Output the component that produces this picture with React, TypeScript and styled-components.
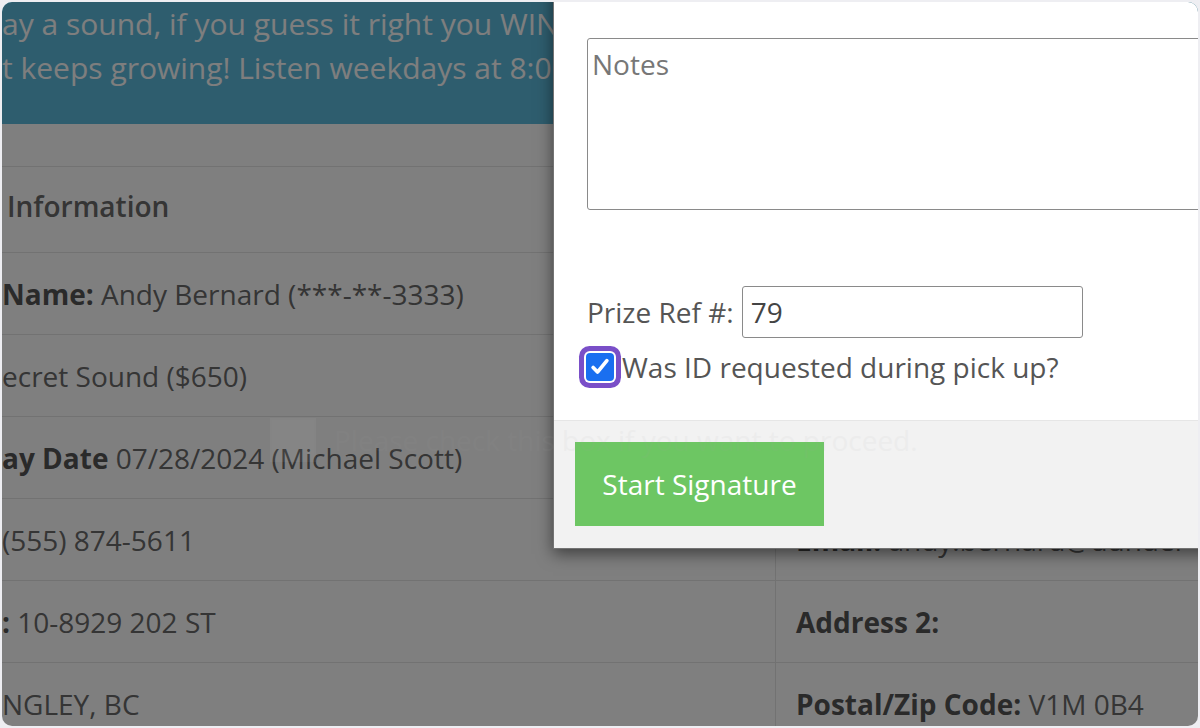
import styled, { createGlobalStyle } from "styled-components";

const GlobalStyle = createGlobalStyle`
  html, body {
    margin: 0;
    padding: 0;
    background: #eeeef2;
  }
  body {
    font-family: "Open Sans", "Noto Sans", sans-serif;
  }
  * {
    box-sizing: border-box;
  }
`;

interface Entry {
  label?: string;
  value?: string;
}

interface Row {
  left: Entry;
  right: Entry;
}

const rows: Row[] = [
  { left: { label: "Name:", value: " Andy Bernard (***-**-3333)" }, right: {} },
  { left: { value: "ecret Sound ($650)" }, right: {} },
  { left: { label: "ay Date", value: " 07/28/2024 (Michael Scott)" }, right: {} },
  {
    left: { value: "(555) 874-5611" },
    right: { label: "Email:", value: " andy.bernard@dunder" },
  },
  { left: { label: ":", value: " 10-8929 202 ST" }, right: { label: "Address 2:" } },
  {
    left: { value: "NGLEY, BC" },
    right: { label: "Postal/Zip Code:", value: " V1M 0B4" },
  },
];

const App = () => {
  return (
    <>
      <GlobalStyle />
      <Frame>
        <Page>
          <Banner>
            <BannerLine>ay a sound, if you guess it right you WIN</BannerLine>
            <BannerLine>t keeps growing! Listen weekdays at 8:00</BannerLine>
          </Banner>
          <Spacer />
          <HeaderRow>
            <HeaderText>Information</HeaderText>
          </HeaderRow>
          {rows.map((row, i) => (
            <TableRow key={i}>
              <Cell>
                {row.left.label && <Label>{row.left.label}</Label>}
                {row.left.value}
              </Cell>
              <Cell divided>
                {row.right.label && <Label>{row.right.label}</Label>}
                {row.right.value}
              </Cell>
            </TableRow>
          ))}
        </Page>
        <Overlay />
        <Ghost>
          <GhostBox />
          Please check this box if you want to proceed.
        </Ghost>
        <Modal>
          <ModalBody>
            <Notes placeholder="Notes" />
            <FieldRow>
              <FieldLabel>Prize Ref #:</FieldLabel>
              <TextInput defaultValue="79" />
            </FieldRow>
            <CheckRow>
              <CheckBox>
                <svg width="22" height="22" viewBox="0 0 24 24" fill="none">
                  <path
                    d="M4.5 12.5l4.8 5L19.5 5"
                    stroke="#fff"
                    strokeWidth="4"
                    strokeLinecap="round"
                    strokeLinejoin="round"
                  />
                </svg>
              </CheckBox>
              <CheckLabel>Was ID requested during pick up?</CheckLabel>
            </CheckRow>
          </ModalBody>
          <ModalFooter>
            <SignButton>Start Signature</SignButton>
          </ModalFooter>
        </Modal>
      </Frame>
    </>
  );
};

export default App;

const Frame = styled.div`
  position: relative;
  margin: 2px;
  height: 724px;
  border-radius: 10px;
  overflow: hidden;
  background: #fff;
`;

const Page = styled.div`
  width: 100%;
`;

const Banner = styled.div`
  height: 122px;
  background: #5cbbdd;
  color: #fdfdfd;
  font-size: 30px;
  line-height: 44px;
  padding-left: 0;
  overflow: hidden;
`;

const BannerLine = styled.div`
  white-space: nowrap;
`;

const Spacer = styled.div`
  height: 42px;
`;

const HeaderRow = styled.div`
  display: flex;
  align-items: center;
  height: 86px;
  border-top: 1px solid #e4e4e4;
  padding: 0 0 8px 5px;
`;

const HeaderText = styled.h3`
  margin: 0;
  font-size: 28px;
  font-weight: 600;
  color: #6a6a6a;
`;

const TableRow = styled.div`
  display: grid;
  grid-template-columns: 773px 1fr;
  height: 82px;
  border-top: 1px solid #e4e4e4;
`;

const Cell = styled.div<{ divided?: boolean }>`
  display: flex;
  align-items: center;
  white-space: pre;
  font-size: 28px;
  color: #6a6a6a;
  padding-left: ${({ divided }) => (divided ? "20px" : "0")};
  border-left: ${({ divided }) => (divided ? "1px solid #e4e4e4" : "none")};
  overflow: hidden;
`;

const Label = styled.b`
  font-weight: 700;
  color: #555;
`;

const Overlay = styled.div`
  position: absolute;
  inset: 0;
  background: rgba(0, 0, 0, 0.5);
`;

const Ghost = styled.div`
  position: absolute;
  left: 268px;
  top: 416px;
  display: flex;
  align-items: center;
  gap: 18px;
  font-size: 28px;
  color: #a4a4a4;
  opacity: 0.07;
  white-space: nowrap;
  z-index: 3;
`;

const GhostBox = styled.span`
  width: 46px;
  height: 44px;
  border: 2px solid #ccc;
  background: #ddd;
`;

const Modal = styled.div`
  position: absolute;
  left: 551px;
  top: -40px;
  width: 720px;
  background: #fff;
  border: 1px solid rgba(0, 0, 0, 0.55);
  box-shadow: 0 5px 15px rgba(0, 0, 0, 0.5);
  z-index: 2;
`;

const ModalBody = styled.div`
  height: 457px;
  padding: 75px 0 0 33px;
  display: flex;
  flex-direction: column;
`;

const Notes = styled.textarea`
  width: 660px;
  height: 172px;
  border: 1px solid #8a8a8a;
  border-radius: 3px;
  padding: 6px 4px;
  font-family: "Open Sans", "Noto Sans", sans-serif;
  font-size: 28px;
  line-height: 38px;
  resize: none;
  &::placeholder {
    color: #777;
  }
`;

const FieldRow = styled.div`
  display: flex;
  align-items: center;
  gap: 8px;
  margin-top: 76px;
`;

const FieldLabel = styled.label`
  font-size: 28px;
  color: #555;
`;

const TextInput = styled.input`
  width: 341px;
  height: 52px;
  border: 1px solid #8a8a8a;
  border-radius: 3px;
  padding: 0 8px;
  font-family: "Open Sans", "Noto Sans", sans-serif;
  font-size: 28px;
  color: #444;
`;

const CheckRow = styled.div`
  display: flex;
  align-items: center;
  gap: 8px;
  margin-top: 10px;
`;

const CheckBox = styled.span`
  display: flex;
  align-items: center;
  justify-content: center;
  width: 28px;
  height: 28px;
  margin-left: -1px;
  border-radius: 4px;
  background: #1a6ff0;
  box-shadow: 0 0 0 2px #fff, 0 0 0 7px #7a4fc8;
`;

const CheckLabel = styled.span`
  font-size: 28px;
  color: #555;
`;

const ModalFooter = styled.div`
  height: 128px;
  border-top: 1px solid #e6e6e6;
  background: #f2f2f2;
  padding: 21px 0 0 21px;
`;

const SignButton = styled.button`
  width: 249px;
  height: 84px;
  border: none;
  border-radius: 0;
  background: #6dc663;
  color: #fff;
  font-family: "Open Sans", "Noto Sans", sans-serif;
  font-size: 28px;
`;
